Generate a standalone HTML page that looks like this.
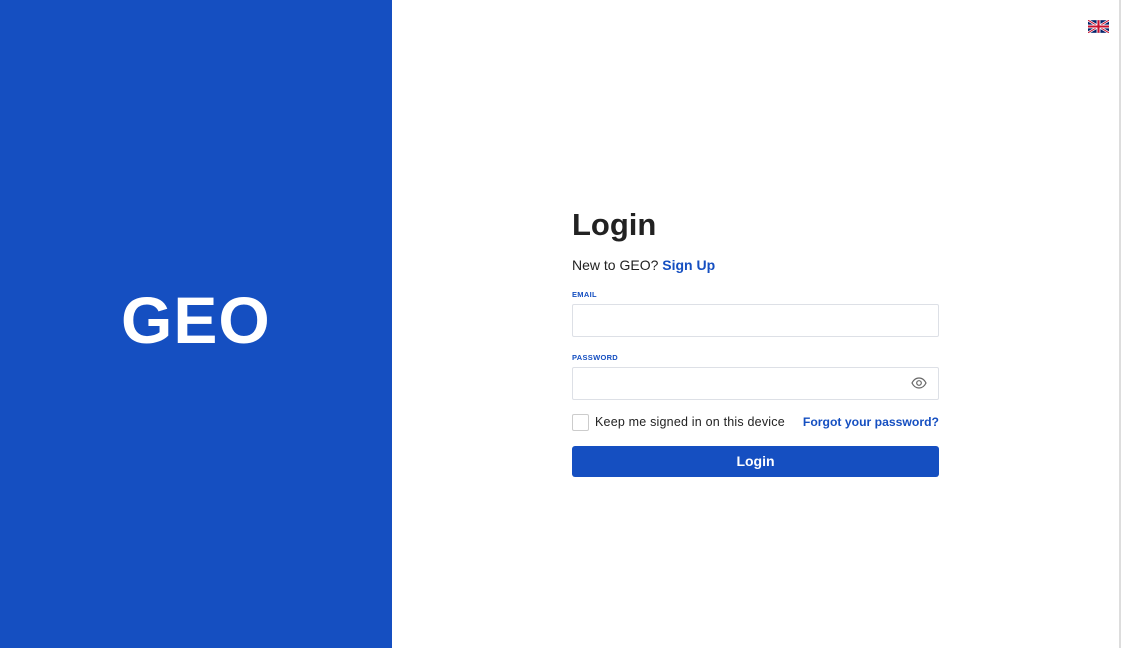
<!DOCTYPE html>
<html><head><style>
body{margin:0;width:1121px;height:648px;position:relative;font-family:"Liberation Sans",sans-serif;background:#fff;overflow:hidden}
.left{position:absolute;left:0;top:0;width:392px;height:648px;background:#154fc1}
.geo{position:absolute;left:121px;top:282px;width:160px;color:#fff;font-weight:bold;font-size:66px;line-height:76px;letter-spacing:1px}
.edge{position:absolute;left:1119px;top:0;width:2px;height:648px;background:#ddd}
.f{position:absolute;left:572px;width:367px}
h1{position:absolute;left:572px;top:206px;margin:0;font-size:31px;font-weight:bold;color:#222;line-height:38px}
.new{top:257px;font-size:14px;color:#222}
.new b{color:#154fc1}
.lbl{font-size:7.5px;font-weight:bold;color:#154fc1;letter-spacing:.3px}
.inp{border:1px solid #dde0e6;border-radius:2px;box-sizing:border-box;height:33px}
.cb{position:absolute;left:572px;top:414px;width:17px;height:17px;border:1px solid #ccc;border-radius:2px;box-sizing:border-box}
.btn{top:446px;height:31px;background:#154fc1;border-radius:3px;color:#fff;font-weight:bold;font-size:14px;text-align:center;line-height:31px}
</style></head><body>
<div class="left"><div class="geo">GEO</div></div>
<div class="edge"></div>
<svg style="position:absolute;left:1088px;top:20px" width="21" height="13" viewBox="0 0 60 36"><rect width="60" height="36" fill="#012169"/><path d="M0 0L60 36M60 0L0 36" stroke="#fff" stroke-width="7"/><path d="M0 0L60 36M60 0L0 36" stroke="#c8102e" stroke-width="3"/><path d="M30 0V36M0 18H60" stroke="#fff" stroke-width="11"/><path d="M30 0V36M0 18H60" stroke="#c8102e" stroke-width="6"/></svg>
<h1>Login</h1>
<div class="f new">New to GEO? <b>Sign Up</b></div>
<div class="f lbl" style="top:290px">EMAIL</div>
<div class="f inp" style="top:304px"></div>
<div class="f lbl" style="top:353px">PASSWORD</div>
<div class="f inp" style="top:367px"></div>
<svg style="position:absolute;left:911px;top:377px" width="16" height="12" viewBox="0 0 16 12"><path d="M1 6C3 2 5.5 1 8 1S13 2 15 6C13 10 10.5 11 8 11S3 10 1 6Z" fill="none" stroke="#666" stroke-width="1.2"/><circle cx="8" cy="6" r="2.3" fill="none" stroke="#666" stroke-width="1.2"/></svg>
<div class="cb"></div>
<div style="position:absolute;left:595px;top:415px;font-size:12.5px;letter-spacing:.2px;color:#222">Keep me signed in on this device</div>
<div style="position:absolute;right:182px;top:415px;font-size:12.2px;color:#154fc1;font-weight:bold">Forgot your password?</div>
<div class="f btn">Login</div>
</body></html>
